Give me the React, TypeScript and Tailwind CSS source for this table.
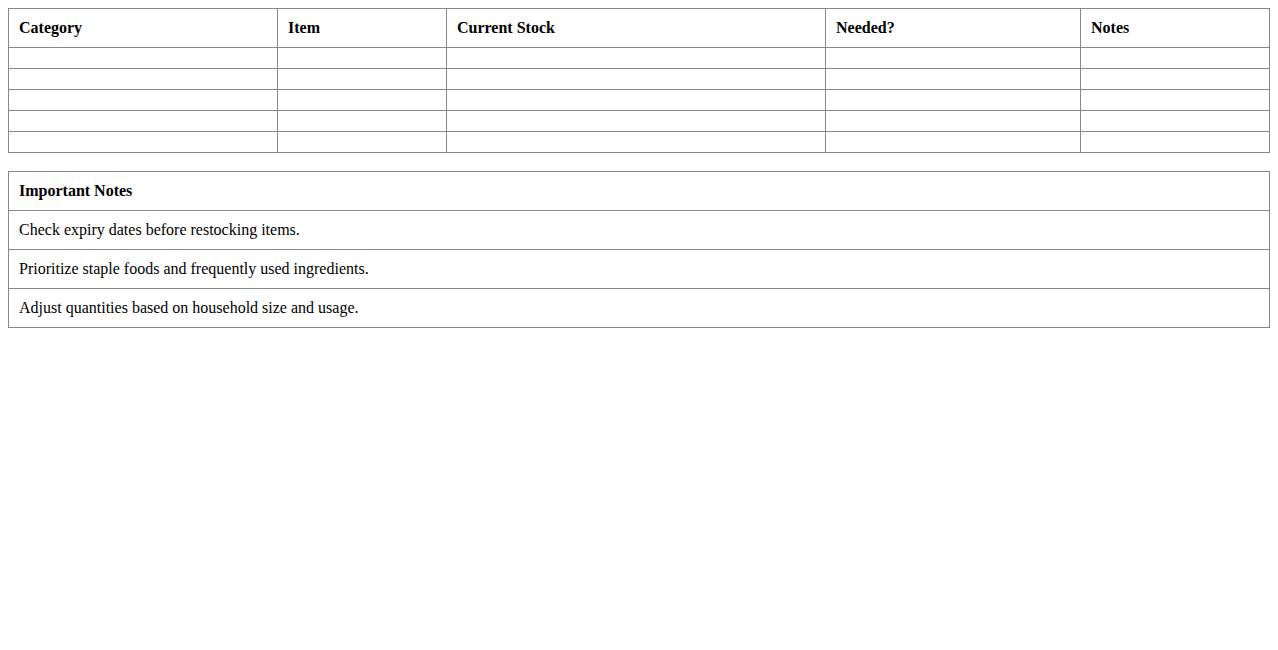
export default function App() {
  const cols = [
    { label: "Category", w: "w-[269px]" },
    { label: "Item", w: "w-[169px]" },
    { label: "Current Stock", w: "w-[379px]" },
    { label: "Needed?", w: "w-[255px]" },
    { label: "Notes", w: "" },
  ];
  const rows = [0, 1, 2, 3, 4];
  const notes = [
    "Check expiry dates before restocking items.",
    "Prioritize staple foods and frequently used ingredients.",
    "Adjust quantities based on household size and usage.",
  ];

  return (
    <div className="min-h-screen bg-white p-2 text-black text-base leading-[18px] font-['Liberation_Serif',serif]">
      <table className="w-full border-collapse table-fixed">
        <thead>
          <tr>
            {cols.map((c) => (
              <th key={c.label} className={`${c.w} border border-[#888] p-2.5 text-left font-bold`}>
                {c.label}
              </th>
            ))}
          </tr>
        </thead>
        <tbody>
          {rows.map((r) => (
            <tr key={r}>
              {cols.map((c) => (
                <td key={c.label} className="border border-[#888] p-2.5"></td>
              ))}
            </tr>
          ))}
        </tbody>
      </table>

      <table className="w-full border-collapse mt-[18px]">
        <thead>
          <tr>
            <th className="border border-[#888] p-2.5 text-left font-bold">Important Notes</th>
          </tr>
        </thead>
        <tbody>
          {notes.map((n) => (
            <tr key={n}>
              <td className="border border-[#888] p-2.5">{n}</td>
            </tr>
          ))}
        </tbody>
      </table>
    </div>
  );
}
